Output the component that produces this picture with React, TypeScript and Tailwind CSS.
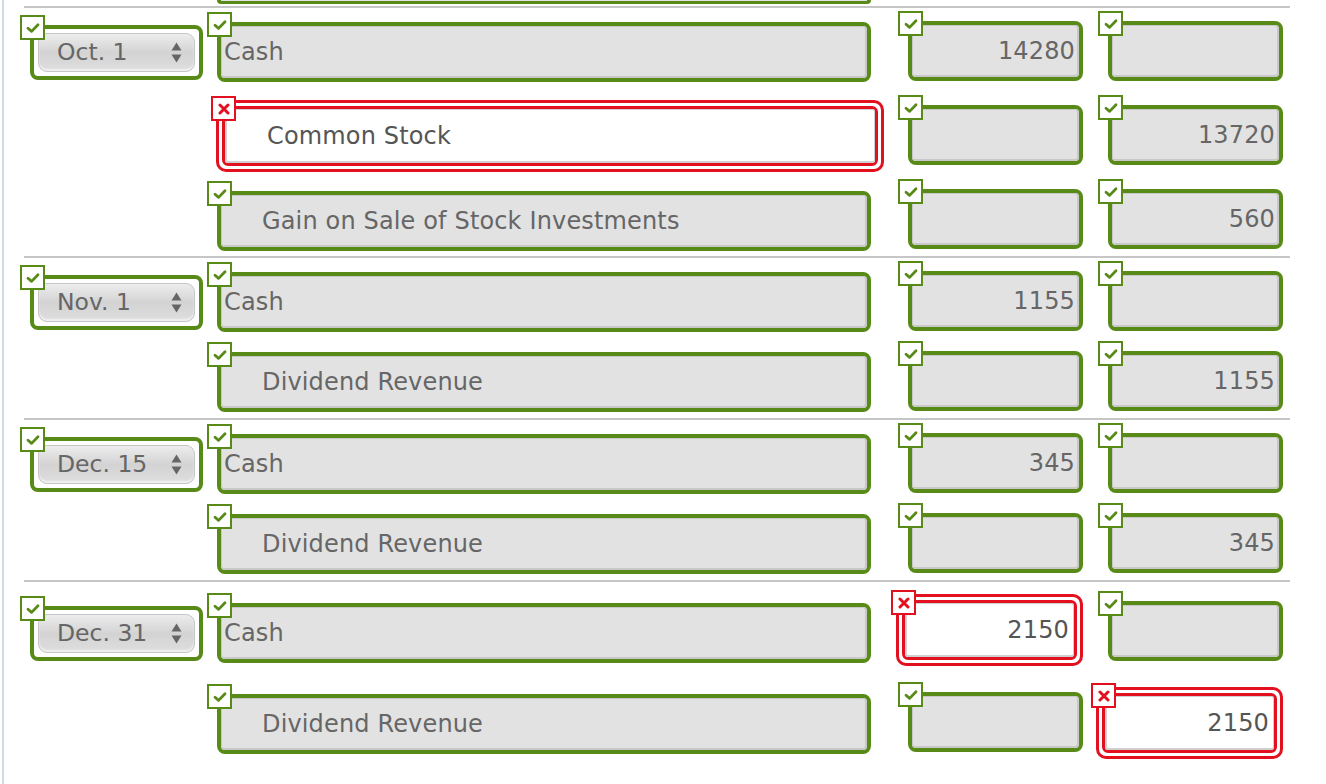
import React from "react";

function GreenBadge() {
  return (
    <div className="absolute -left-[14px] -top-[14px] z-10 flex h-[25px] w-[25px] items-center justify-center border-2 border-[#588a18] bg-white">
      <svg width="14" height="12" viewBox="0 0 14 12">
        <path d="M2 6.2 L5.6 9.4 L12 2.8" stroke="#588a18" strokeWidth="2.8" fill="none" strokeLinecap="round" strokeLinejoin="round" />
      </svg>
    </div>
  );
}

function RedBadge() {
  return (
    <div className="absolute -left-[8px] -top-[7px] z-10 flex h-[25px] w-[25px] items-center justify-center border-2 border-[#e3101f] bg-white">
      <svg width="12" height="12" viewBox="0 0 12 12">
        <path d="M2 2 L10 10 M10 2 L2 10" stroke="#e3101f" strokeWidth="3" fill="none" strokeLinecap="round" />
      </svg>
    </div>
  );
}

type FieldProps = {
  text?: string;
  right?: boolean;
  indent?: boolean;
  box: string;
};

function GreenField({ text = "", right, indent, box }: FieldProps) {
  return (
    <div className={`relative h-[60px] rounded-[8px] border-4 border-[#588a18] ${box}`}>
      <GreenBadge />
      <div
        className={`flex h-full w-full items-center rounded-[4px] border border-b-2 border-r-2 border-[#c8c8c8] bg-[#e2e2e2] text-[24px] tracking-[0.15px] text-[#666666] ${
          right ? "justify-end pr-[2px]" : indent ? "pl-[40px]" : "pl-[2px]"
        }`}
      >
        {text}
      </div>
    </div>
  );
}

function RedField({ text = "", right, indent, box }: FieldProps) {
  return (
    <div className={`relative h-[72px] rounded-[10px] border-[3px] border-[#e3101f] bg-white p-[3px] ${box}`}>
      <RedBadge />
      <div className="h-full w-full rounded-[6px] border-[3px] border-[#e3101f]">
        <div
          className={`flex h-full w-full items-center rounded-[3px] border border-b-2 border-l-2 border-[#cfcfcf] bg-white text-[24px] tracking-[0.15px] text-[#555555] ${
            right ? "justify-end pr-[4px]" : indent ? "pl-[40px]" : "pl-[3px]"
          }`}
        >
          {text}
        </div>
      </div>
    </div>
  );
}

function DateSelect({ label, mt }: { label: string; mt: string }) {
  return (
    <div className={`relative ml-[26px] h-[55px] w-[173px] rounded-[8px] border-4 border-[#588a18] p-[4px] ${mt}`}>
      <GreenBadge />
      <div className="flex h-full w-full items-center justify-between rounded-[9px] border border-[#c6c6c6] bg-gradient-to-b from-[#ededed] via-[#d3d3d3] to-[#dedede] pl-[18px] pr-[12px] text-[23.5px] text-[#666666] shadow-[inset_0_-2px_2px_rgba(255,255,255,0.6)]">
        <span>{label}</span>
        <svg width="11" height="21" viewBox="0 0 11 21">
          <path d="M0.5 8.5 L5.5 0.5 L10.5 8.5 Z" fill="#666666" />
          <path d="M0.5 12.5 L10.5 12.5 L5.5 20.5 Z" fill="#666666" />
        </svg>
      </div>
    </div>
  );
}

type Cell = { kind: "g" | "r"; text?: string; mt: string };

type RowDef = {
  h: string;
  date?: { label: string; mt: string };
  acct: Cell & { indent?: boolean };
  debit: Cell;
  credit: Cell;
};

function Row({ r }: { r: RowDef }) {
  return (
    <div className={`flex items-start ${r.h}`}>
      <div className="w-[206px] shrink-0">
        {r.date && <DateSelect label={r.date.label} mt={r.date.mt} />}
      </div>
      <div className={`w-[680px] shrink-0 ${r.acct.mt}`}>
        {r.acct.kind === "g" ? (
          <GreenField box="ml-[7px] w-[654px]" text={r.acct.text} indent={r.acct.indent} />
        ) : (
          <RedField box="ml-[6px] w-[668px]" text={r.acct.text} indent={r.acct.indent} />
        )}
      </div>
      <div className={`w-[200px] shrink-0 ${r.debit.mt}`}>
        {r.debit.kind === "g" ? (
          <GreenField box="ml-[18px] w-[175px]" text={r.debit.text} right />
        ) : (
          <RedField box="ml-[6px] w-[187px]" text={r.debit.text} right />
        )}
      </div>
      <div className={`w-[200px] shrink-0 ${r.credit.mt}`}>
        {r.credit.kind === "g" ? (
          <GreenField box="ml-[18px] w-[175px]" text={r.credit.text} right />
        ) : (
          <RedField box="ml-[6px] w-[187px]" text={r.credit.text} right />
        )}
      </div>
    </div>
  );
}

function Sep() {
  return <div className="ml-[20px] h-[2px] w-[1266px] bg-[#c6c6c6]" />;
}

const groups: RowDef[][] = [
  [
    {
      h: "h-[80px]",
      date: { label: "Oct. 1", mt: "mt-[17px]" },
      acct: { kind: "g", text: "Cash", mt: "mt-[14px]" },
      debit: { kind: "g", text: "14280", mt: "mt-[13px]" },
      credit: { kind: "g", text: "", mt: "mt-[13px]" },
    },
    {
      h: "h-[88px]",
      acct: { kind: "r", text: "Common Stock", mt: "mt-[12px]", indent: true },
      debit: { kind: "g", text: "", mt: "mt-[17px]" },
      credit: { kind: "g", text: "13720", mt: "mt-[17px]" },
    },
    {
      h: "h-[80px]",
      acct: { kind: "g", text: "Gain on Sale of Stock Investments", mt: "mt-[15px]", indent: true },
      debit: { kind: "g", text: "", mt: "mt-[13px]" },
      credit: { kind: "g", text: "560", mt: "mt-[13px]" },
    },
  ],
  [
    {
      h: "h-[80px]",
      date: { label: "Nov. 1", mt: "mt-[17px]" },
      acct: { kind: "g", text: "Cash", mt: "mt-[14px]" },
      debit: { kind: "g", text: "1155", mt: "mt-[13px]" },
      credit: { kind: "g", text: "", mt: "mt-[13px]" },
    },
    {
      h: "h-[80px]",
      acct: { kind: "g", text: "Dividend Revenue", mt: "mt-[14px]", indent: true },
      debit: { kind: "g", text: "", mt: "mt-[13px]" },
      credit: { kind: "g", text: "1155", mt: "mt-[13px]" },
    },
  ],
  [
    {
      h: "h-[80px]",
      date: { label: "Dec. 15", mt: "mt-[17px]" },
      acct: { kind: "g", text: "Cash", mt: "mt-[14px]" },
      debit: { kind: "g", text: "345", mt: "mt-[13px]" },
      credit: { kind: "g", text: "", mt: "mt-[13px]" },
    },
    {
      h: "h-[80px]",
      acct: { kind: "g", text: "Dividend Revenue", mt: "mt-[14px]", indent: true },
      debit: { kind: "g", text: "", mt: "mt-[13px]" },
      credit: { kind: "g", text: "345", mt: "mt-[13px]" },
    },
  ],
  [
    {
      h: "h-[92px]",
      date: { label: "Dec. 31", mt: "mt-[24px]" },
      acct: { kind: "g", text: "Cash", mt: "mt-[21px]" },
      debit: { kind: "r", text: "2150", mt: "mt-[12px]" },
      credit: { kind: "g", text: "", mt: "mt-[19px]" },
    },
    {
      h: "h-[88px]",
      acct: { kind: "g", text: "Dividend Revenue", mt: "mt-[20px]", indent: true },
      debit: { kind: "g", text: "", mt: "mt-[18px]" },
      credit: { kind: "r", text: "2150", mt: "mt-[13px]" },
    },
  ],
];

export default function App() {
  return (
    <div className="h-[784px] w-[1326px] overflow-hidden bg-white font-['DejaVu_Sans',Verdana,sans-serif]">
      <div className="ml-[2px] h-full border-l-2 border-[#d4dae4]">
        <div className="ml-[213px] h-[4px] w-[654px] rounded-b-[8px] border-x-4 border-b-[3px] border-[#588a18] bg-[#e2e2e2]" />
        <div className="h-[2px]" />
        {groups.map((g, gi) => (
          <div key={gi}>
            <Sep />
            {g.map((r, ri) => (
              <Row key={ri} r={r} />
            ))}
          </div>
        ))}
      </div>
    </div>
  );
}
